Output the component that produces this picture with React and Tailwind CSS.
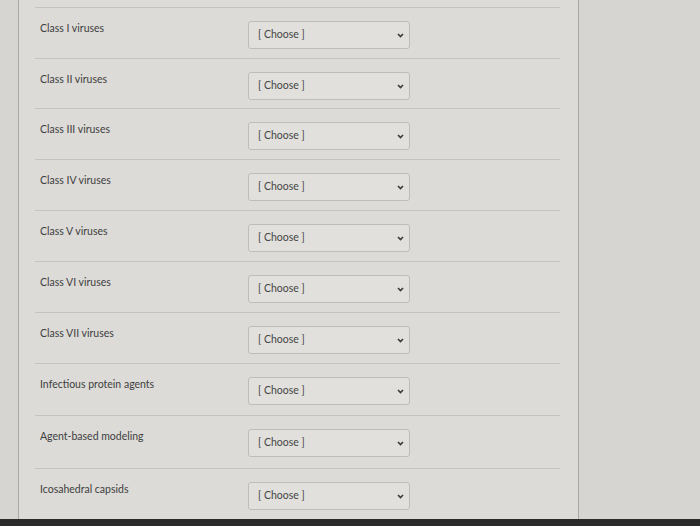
import React from 'react';

const rows = [
  { label: "Class I viruses", h: 51 },
  { label: "Class II viruses", h: 50 },
  { label: "Class III viruses", h: 51 },
  { label: "Class IV viruses", h: 51 },
  { label: "Class V viruses", h: 51 },
  { label: "Class VI viruses", h: 51 },
  { label: "Class VII viruses", h: 51 },
  { label: "Infectious protein agents", h: 52 },
  { label: "Agent-based modeling", h: 53 },
  { label: "Icosahedral capsids", h: 51 },
];

const Chevron = () => (
  <svg width="7" height="5" viewBox="0 0 7 5" className="text-[#3a3a3a]">
    <path d="M1 1 L3.5 3.6 L6 1" fill="none" stroke="currentColor" strokeWidth="1.6" />
  </svg>
);

const App = () => {
  return (
    <div className="w-[700px] h-[526px] bg-[#d6d5d1] overflow-hidden flex flex-col font-['Lato','Liberation_Sans',sans-serif]">
      <div className="flex-1 flex">
        <div className="ml-[18px] w-[561px] bg-[#dcdbd7] border-l border-r border-[#a9a8a4] pt-[7px] pl-[16px] pr-[18px]">
          {rows.map((row) => (
            <div
              key={row.label}
              style={{ height: row.h }}
              className="border-t border-[#c4c3bf] flex items-start"
            >
              <div className="w-[213px] pl-[5px] pt-[14px] text-[10.5px] text-[#404040] leading-[12px]">
                {row.label}
              </div>
              <div className="mt-[13px] w-[162px] h-[28px] bg-[#e1e0dc] border border-[#bebdb9] rounded-[3px] flex items-center justify-between pl-[9px] pr-[5px] text-[10.5px] text-[#454545]">
                <span>[ Choose ]</span>
                <Chevron />
              </div>
            </div>
          ))}
        </div>
      </div>
      <div className="h-[7px] bg-[#2b2b2b]"></div>
    </div>
  );
};

export default App;
